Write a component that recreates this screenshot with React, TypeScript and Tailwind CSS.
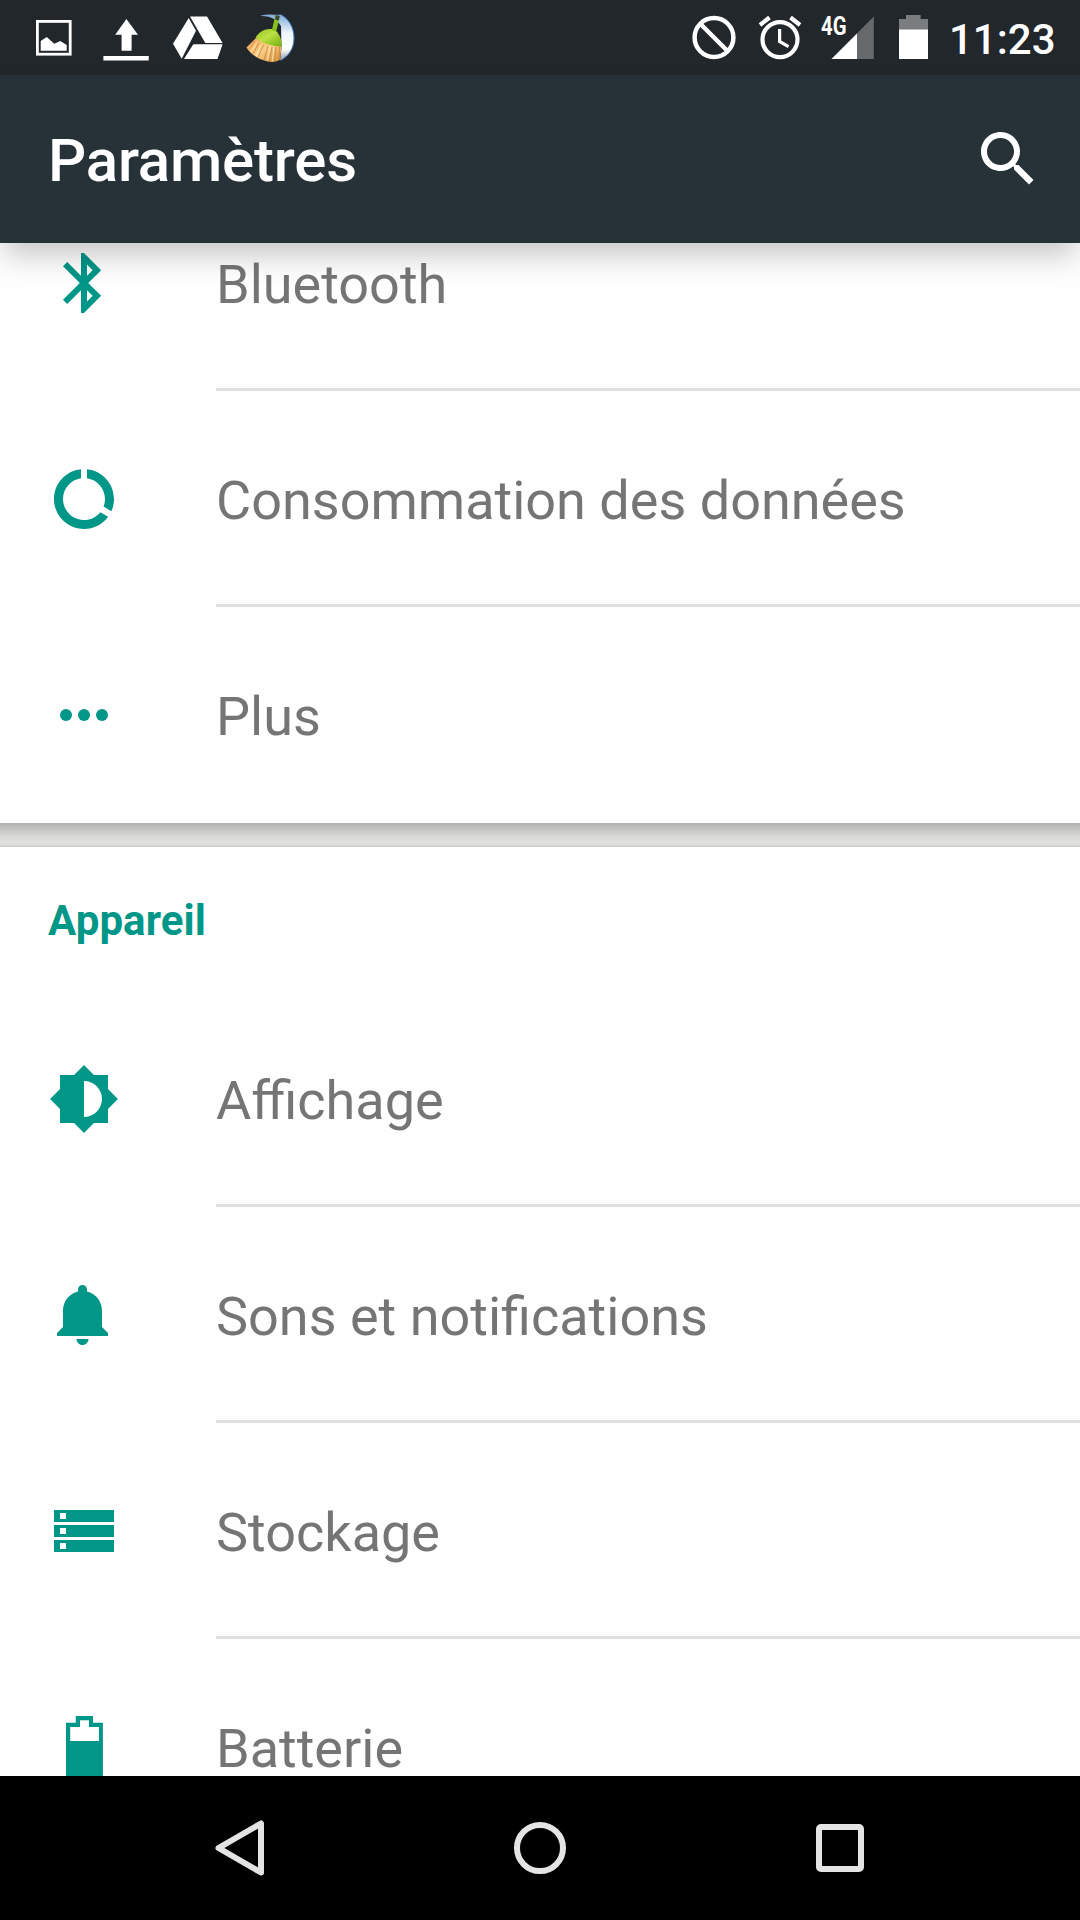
import type { ReactNode } from "react";

const TEAL = "#009688";

const icons: Record<string, ReactNode> = {
  bluetooth: (
    <path d="M17.71 7.71L12 2h-1v7.59L6.41 5 5 6.41 10.59 12 5 17.59 6.41 19 11 14.41V22h1l5.71-5.71-4.3-4.29 4.3-4.29zM13 5.83l1.88 1.88L13 9.59V5.83zm1.88 10.46L13 18.17v-3.76l1.88 1.88z" />
  ),
  data: (
    <path d="M13 2.05v3.03c3.39.49 6 3.39 6 6.92 0 .9-.18 1.75-.48 2.54l2.6 1.53c.56-1.24.88-2.62.88-4.07 0-5.18-3.95-9.45-9-9.95zM12 19c-3.87 0-7-3.13-7-7 0-3.53 2.61-6.43 6-6.92V2.05c-5.06.5-9 4.76-9 9.95 0 5.52 4.47 10 9.99 10 3.31 0 6.24-1.61 8.06-4.09l-2.6-1.53C16.17 17.98 14.21 19 12 19z" />
  ),
  more: (
    <>
      <circle cx="6" cy="12" r="2" />
      <circle cx="12" cy="12" r="2" />
      <circle cx="18" cy="12" r="2" />
    </>
  ),
  display: (
    <path d="M20 15.31L23.31 12 20 8.69V4h-4.69L12 .69 8.69 4H4v4.69L.69 12 4 15.31V20h4.69L12 23.31 15.31 20H20v-4.69zM12 18V6c3.31 0 6 2.69 6 6s-2.69 6-6 6z" />
  ),
  bell: (
    <path d="M11.5 22c1.1 0 2-.9 2-2h-4c0 1.1.9 2 2 2zm6.5-6v-5.5c0-3.07-2.13-5.64-5-6.32V3.5c0-.83-.67-1.5-1.5-1.5S10 2.67 10 3.5v.68c-2.87.68-5 3.25-5 6.32V16l-2 2v1h17v-1l-2-2z" />
  ),
  storage: (
    <path
      fillRule="evenodd"
      d="M2 5h20v4H2zM4 6v2h2V6zM2 10h20v4H2zM4 11v2h2v-2zM2 15h20v4H2zM4 16v2h2v-2z"
    />
  ),
  battery: (
    <path
      fillRule="evenodd"
      d="M9.25 1.67H15V3.9h3.3V22H6V3.9h3.25zM10.67 3.1v2.25H7.4V10H17V5.35h-3.35V3.1z"
    />
  ),
};

type Item = { icon: string; label: string };

const wireless: Item[] = [
  { icon: "bluetooth", label: "Bluetooth" },
  { icon: "data", label: "Consommation des données" },
  { icon: "more", label: "Plus" },
];

const device: Item[] = [
  { icon: "display", label: "Affichage" },
  { icon: "bell", label: "Sons et notifications" },
  { icon: "storage", label: "Stockage" },
  { icon: "battery", label: "Batterie" },
];

function Row({ icon, label, last }: Item & { last?: boolean }) {
  return (
    <li className="flex h-[216px] shrink-0">
      <div className="flex w-[216px] items-center pl-12">
        <svg viewBox="0 0 24 24" className="size-[72px]" fill={TEAL}>
          {icons[icon]}
        </svg>
      </div>
      <div className="flex flex-1 flex-col">
        <span className="flex h-[216px] items-center pt-[3px] text-[54px] leading-none text-[#757575]">
          {label}
        </span>
        {!last && <div className="-mt-[3px] h-[3px] bg-[#e0e0e0]" />}
      </div>
    </li>
  );
}

function NotificationIcons() {
  return (
    <div className="flex pl-[18px]">
      <svg width="72" height="75" viewBox="0 0 72 75" fill="#fff">
        <rect x="19.4" y="21.4" width="32.8" height="32.8" fill="none" stroke="#fff" strokeWidth="2.8" />
        <path d="M22.7 50.7V41l6-4 7.6 6.7 6-2.7 6.4 4v5.7z" />
      </svg>
      <svg width="72" height="75" viewBox="0 0 72 75" fill="#fff">
        <path d="M36.4 19L48 34.8h-6.4v16h-10v-16h-6.4zM13.4 56h45.3v4.6H13.4z" />
      </svg>
      <svg width="72" height="75" viewBox="0 0 72 75" fill="#fff">
        <path d="M26.7 18L34 30.7 19.7 58.7 11 43.7zM28 16.5h17L60.6 43H43.3zM31.3 44.3h29.3L55.5 59H22z" />
      </svg>
      <svg width="72" height="75" viewBox="0 0 72 75">
        <defs>
          <linearGradient id="moon" x1="0" y1="0" x2="0" y2="1">
            <stop offset="0" stopColor="#7fa9d6" />
            <stop offset=".4" stopColor="#eef5fc" />
            <stop offset=".75" stopColor="#fff" />
            <stop offset="1" stopColor="#8d9aa6" />
          </linearGradient>
          <linearGradient id="dome" x1="0" y1="0" x2="1" y2="1">
            <stop offset="0" stopColor="#8fc31c" />
            <stop offset=".45" stopColor="#bfe046" />
            <stop offset="1" stopColor="#6fae0c" />
          </linearGradient>
          <linearGradient id="straw" x1="0" y1="0" x2="1" y2="1">
            <stop offset="0" stopColor="#f3a552" />
            <stop offset=".5" stopColor="#fbcf88" />
            <stop offset="1" stopColor="#d58a35" />
          </linearGradient>
        </defs>
        <path d="M26 16c8-2.500 15-1 21-1.200C55 19 60 28 60 38c0 11-6 19-14 22.500L47.500 48 47 26C42 18 34 15.500 26 16z" fill="url(#moon)" />
        <path d="M47 14.800C55 19 60 28 60 38c0 10-5 18-13 22" fill="none" stroke="#3f80c2" strokeWidth="1" />
        <path d="M22 38L12.500 47.500c4 7 14 13.500 25 14.500 4 0 7-1 8.500-2.500l1.500-13z" fill="url(#straw)" />
        <path
          d="M21 41l-6 8.500M25 43l-6 11M29.500 45l-5.500 12.500M34 46l-4 14M38 47l-2.500 14M42 47l-1.500 14M45.500 47l-.5 12"
          stroke="#c27a30"
          strokeWidth=".7"
        />
        <path d="M23 42l-6 10M27.500 44.500l-5.500 11.500M36 47l-2.500 13.500M40 47.500l-1.500 14" stroke="#fff0c4" strokeWidth=".8" />
        <path d="M21.500 37.500c3.500-5.500 9-9 16-8.500 6 1 10.200 7.500 10.200 17.500C37 46.500 27.500 43 21.500 37.500z" fill="url(#dome)" />
        <path d="M43.500 16L40 31" stroke="#86c41a" strokeWidth="4.500" />
        <path d="M43.800 15.500L42.900 20" stroke="#3c4a3a" strokeWidth="4" />
      </svg>
    </div>
  );
}

function SystemIcons() {
  return (
    <div className="flex items-start">
      <svg width="44" height="75" viewBox="0 0 44 75" fill="none" stroke="#fff" strokeWidth="4.500">
        <circle cx="22" cy="37.500" r="19.400" />
        <path d="M8 23.500l28 28" />
      </svg>
      <svg className="ml-[22px]" width="44" height="75" viewBox="0 0 44 75" fill="none" stroke="#fff">
        <circle cx="22" cy="39.600" r="17.500" strokeWidth="4.200" />
        <path d="M2 25l9.500-7.500M42 25l-9.500-7.500" strokeWidth="4.200" />
        <path d="M21.600 29v12.500l9 5.200" strokeWidth="3.200" />
      </svg>
      <div className="relative ml-[18px]">
        <svg width="56" height="75" viewBox="0 0 56 75">
          <path d="M53.800 16.500V59H11.500z" fill="#66696c" />
          <path d="M37 33.400V59H11.500z" fill="#fff" />
        </svg>
        <span className="absolute top-[13px] left-[1px] origin-left scale-x-[.78] text-[26px] leading-[27px] font-bold text-white">
          4G
        </span>
      </div>
      <svg className="ml-[23px]" width="29" height="75" viewBox="0 0 29 75">
        <path d="M0 19h7v-4h14.600v4H29v11H0z" fill="#7a7d80" />
        <path d="M0 29.500h29V59H0z" fill="#fff" />
      </svg>
      <span className="ml-[21px] w-[108px] pt-[19px] text-[42px] leading-[42px] font-medium whitespace-nowrap text-white">
        11:23
      </span>
    </div>
  );
}

export default function App() {
  return (
    <div className="flex h-[1920px] w-[1080px] flex-col overflow-hidden bg-white font-['Roboto',sans-serif]">
      <div className="flex h-[75px] shrink-0 justify-between bg-[#21272b] pr-[23px]">
        <NotificationIcons />
        <SystemIcons />
      </div>

      <header className="relative z-10 flex h-[168px] shrink-0 items-center justify-between bg-[#263238] pr-9 pl-12 shadow-[0_16px_28px_-4px_rgba(0,0,0,0.22)]">
        <h1 className="pt-[4px] text-[60px] leading-none font-medium tracking-[-0.2px] text-white">Paramètres</h1>
        <svg viewBox="0 0 24 24" className="size-[72px]" fill="#fff">
          <path d="M15.5 14h-.79l-.28-.27C15.41 12.59 16 11.11 16 9.5 16 5.91 13.09 3 9.5 3S3 5.91 3 9.5 5.91 16 9.5 16c1.61 0 3.09-.59 4.23-1.57l.27.28v.79l5 4.99L20.49 19l-4.99-5zm-6 0C7.01 14 5 11.99 5 9.5S7.01 5 9.5 5 14 7.01 14 9.5 11.99 14 9.5 14z" />
        </svg>
      </header>

      <main className="flex min-h-0 flex-1 flex-col overflow-hidden">
        {/* list is scrolled, so the first row starts under the app bar */}
        <ul className="-mt-[68px] bg-[#fefefe]">
          {wireless.map((item, i) => (
            <Row key={item.label} {...item} last={i === wireless.length - 1} />
          ))}
        </ul>
        <div className="h-6 shrink-0 bg-[linear-gradient(#b0b0af,#c4c4c3_25%,#d7d7d5_55%,#dfdfdd_80%,#dededc_88%,#cacac8)]" />
        <section className="bg-[#fefefe]">
          <h2 className="flex h-36 items-center pt-[4px] pl-12 text-[42px] leading-none font-bold tracking-[0.1px] text-[#009688]">
            Appareil
          </h2>
          <ul>
            {device.map((item) => (
              <Row key={item.label} {...item} />
            ))}
          </ul>
        </section>
      </main>

      <nav className="flex h-36 shrink-0 items-center justify-between bg-black px-[204px]">
        <svg width="72" height="72" viewBox="0 0 72 72" fill="none" stroke="#e4e4e4" strokeWidth="6" strokeLinejoin="round">
          <path d="M57 11.500v49L14.500 36z" />
        </svg>
        <svg width="72" height="72" viewBox="0 0 72 72" fill="none" stroke="#e4e4e4" strokeWidth="6">
          <circle cx="36" cy="36" r="23" />
        </svg>
        <svg width="72" height="72" viewBox="0 0 72 72" fill="none" stroke="#e4e4e4" strokeWidth="6">
          <rect x="15" y="15" width="42" height="42" rx="2" />
        </svg>
      </nav>
    </div>
  );
}
